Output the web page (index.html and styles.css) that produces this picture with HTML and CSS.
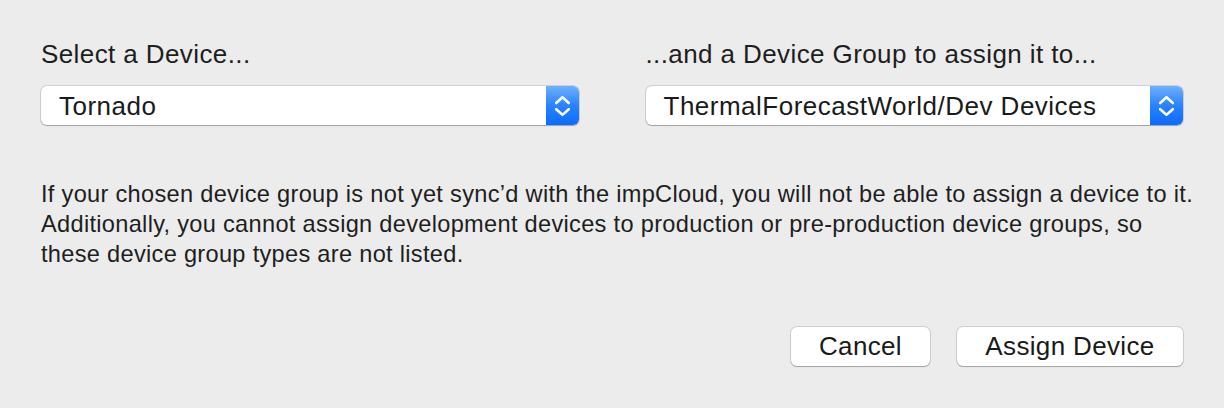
FILE: index.html
```html
<!DOCTYPE html>
<html lang="en">
<head>
<meta charset="utf-8">
<title>Assign Device</title>
<link rel="stylesheet" href="styles.css">
</head>
<body>
<div class="dialog">
  <div class="pickers">
    <div class="field">
      <div class="label">Select a Device...</div>
      <div class="popup">
        <span class="value">Tornado</span>
        <span class="stepper">
          <svg width="33" height="39" viewBox="0 0 33 39"><path d="M10.2 17 L16.5 11.3 L22.8 17" /><path d="M10.2 23.2 L16.5 28.9 L22.8 23.2" /></svg>
        </span>
      </div>
    </div>
    <div class="field">
      <div class="label">...and a Device Group to assign it to...</div>
      <div class="popup">
        <span class="value">ThermalForecastWorld/Dev Devices</span>
        <span class="stepper">
          <svg width="33" height="39" viewBox="0 0 33 39"><path d="M10.2 17 L16.5 11.3 L22.8 17" /><path d="M10.2 23.2 L16.5 28.9 L22.8 23.2" /></svg>
        </span>
      </div>
    </div>
  </div>
  <p class="note">If your chosen device group is not yet sync’d with the impCloud, you will not be able to assign a device to it. Additionally, you cannot assign development devices to production or pre-production device groups, so these device group types are not listed.</p>
  <div class="actions">
    <button class="btn btn-cancel">Cancel</button>
    <button class="btn btn-assign">Assign Device</button>
  </div>
</div>
</body>
</html>
```

FILE: styles.css
```css
html, body {
  margin: 0;
  padding: 0;
  background: #ececec;
}
body {
  width: 1224px;
  height: 408px;
  overflow: hidden;
  font-family: "Liberation Sans", Arial, sans-serif;
  color: #1e1e1e;
}
.dialog {
  padding: 39px 41px 0 41px;
  display: flex;
  flex-direction: column;
}
.pickers {
  display: flex;
  gap: 67px;
}
.field {
  flex: 1 1 0;
  display: flex;
  flex-direction: column;
  gap: 17px;
}
.label {
  font-size: 26px;
  letter-spacing: 0.4px;
  line-height: 30px;
  height: 30px;
  white-space: nowrap;
}
.popup {
  height: 39px;
  box-sizing: border-box;
  background: #ffffff;
  border-radius: 6px;
  box-shadow: 0 0 0 1px rgba(0,0,0,0.12), 0 1px 1px rgba(0,0,0,0.22);
  display: flex;
  align-items: flex-start;
  overflow: hidden;
}
.value {
  flex: 1;
  padding: 2px 0 0 18px;
  font-size: 26px;
  letter-spacing: 0.5px;
  line-height: 37px;
  color: #1a1a1a;
  white-space: nowrap;
}
.stepper {
  width: 33px;
  height: 39px;
  background: linear-gradient(#6cb1fb, #2a82fd 50%, #0a6cfd);
  display: flex;
}
.stepper svg path {
  fill: none;
  stroke: #ffffff;
  stroke-width: 2.6;
  stroke-linecap: round;
  stroke-linejoin: round;
}
.note {
  margin: 54px -20px 0 0;
  font-size: 23.6px;
  letter-spacing: 0.3px;
  line-height: 30px;
  color: #1e1e1e;
}
.actions {
  display: flex;
  justify-content: flex-end;
  gap: 27px;
  margin-top: 58px;
}
.btn {
  height: 39px;
  box-sizing: border-box;
  background: #ffffff;
  border: none;
  border-radius: 6px;
  box-shadow: 0 0 0 1px rgba(0,0,0,0.12), 0 1px 1px rgba(0,0,0,0.22);
  font-family: "Liberation Sans", Arial, sans-serif;
  font-size: 26px;
  letter-spacing: 0.35px;
  color: #1a1a1a;
  padding: 0;
}
.btn-cancel { width: 139px; }
.btn-assign { width: 226px; }
```
